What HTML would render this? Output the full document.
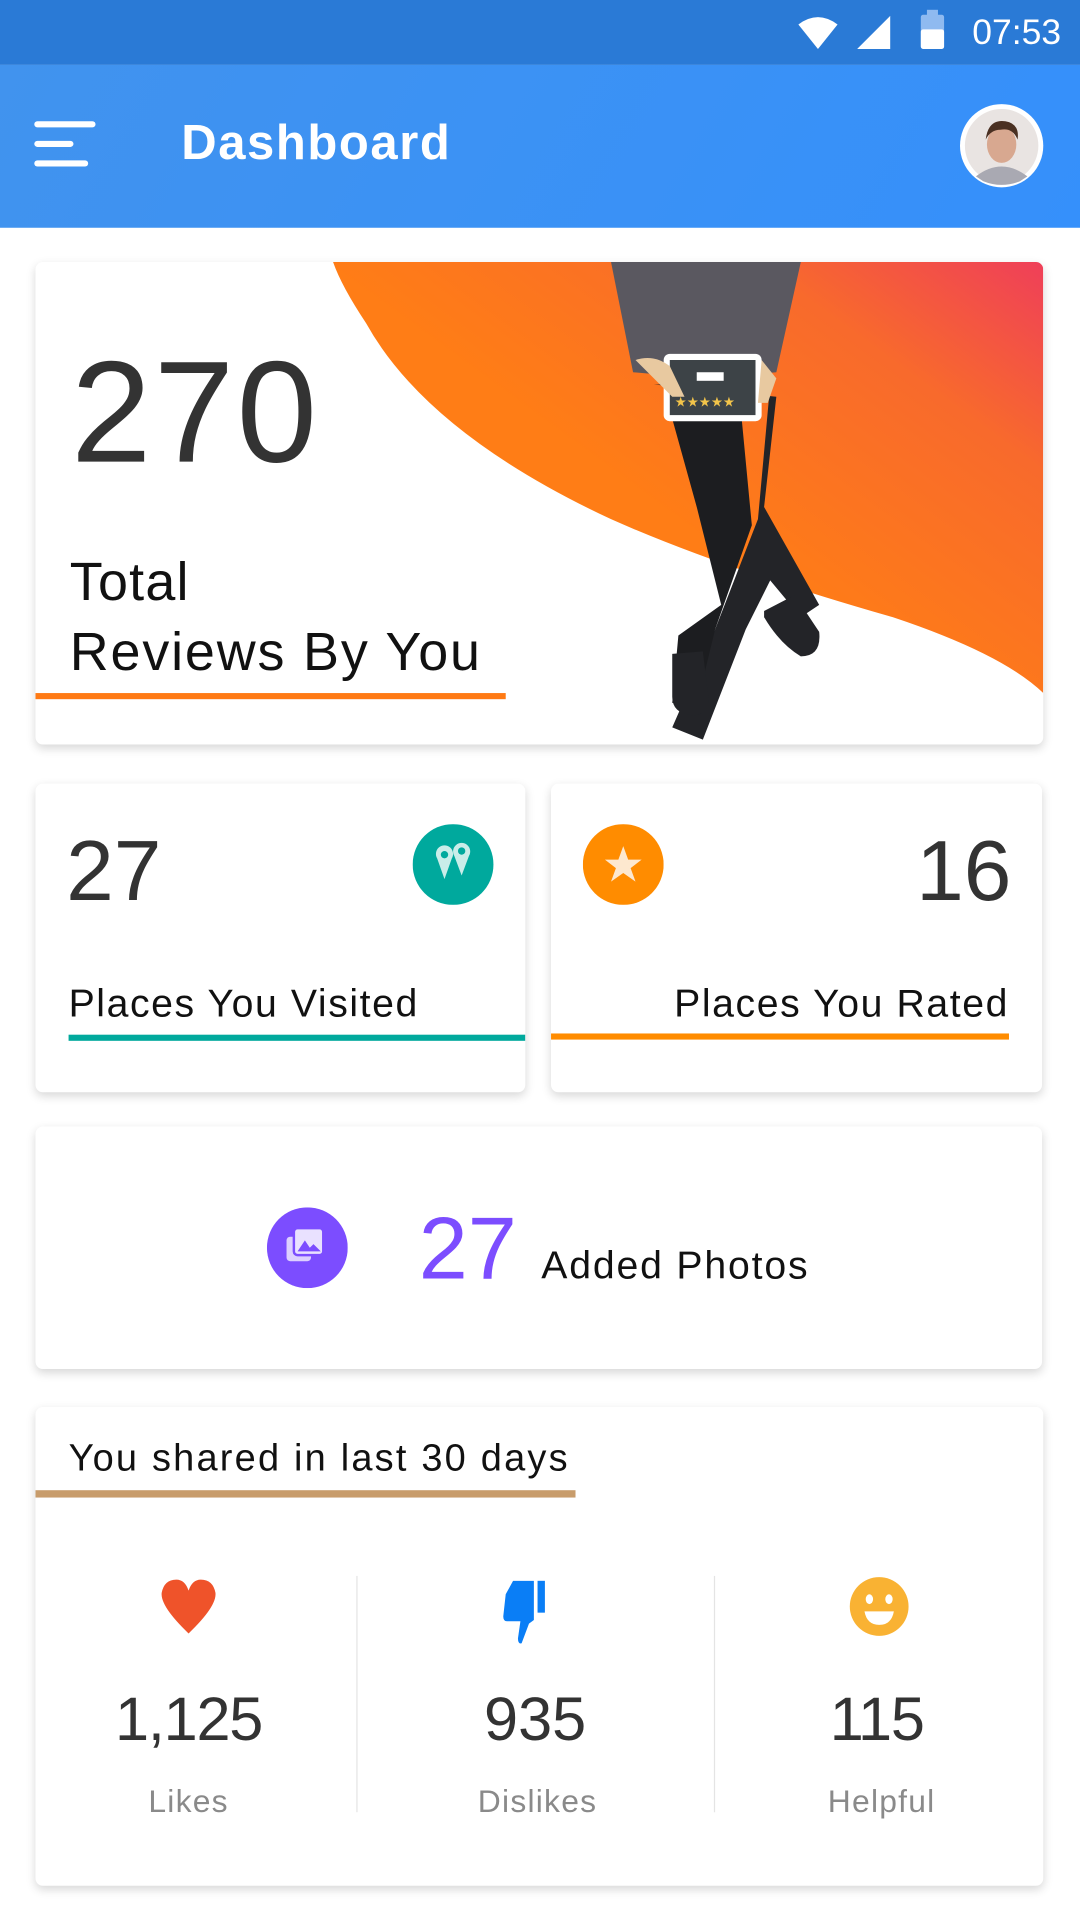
<!DOCTYPE html>
<html><head><meta charset="utf-8"><style>
html,body{margin:0;padding:0;width:1080px;height:1920px;overflow:hidden;background:#fff}
#s{position:absolute;left:0;top:0;width:882px;height:1568px;transform:scale(1.22449);transform-origin:0 0;font-family:"Liberation Sans",sans-serif;background:#fff}
.a{position:absolute}
.card{position:absolute;background:#fff;border-radius:6px;box-shadow:0 3px 8px rgba(0,0,0,.16);overflow:hidden}
.t{position:absolute;white-space:nowrap;line-height:1}
</style></head><body><div id="s">
<div class="a" style="left:0;top:0;width:882px;height:53px;background:#2a7ad6"></div>
<svg class="a" style="left:650;top:0" width="232" height="53" viewBox="650 0 232 53">
<path d="M652 20 Q668 8 684 20 L668 40 Z" fill="#fff"/>
<path d="M700 40 L727 40 L727 13 Z" fill="#fff"/>
<rect x="752" y="12" width="19" height="28" rx="2" fill="#8fbaf0"/><rect x="757" y="8" width="9" height="5" fill="#8fbaf0"/>
<rect x="752" y="24" width="19" height="16" rx="2" fill="#fff"/>
</svg>
<div class="t" style="left:794px;top:13px;font-size:29px;color:#fff">07:53</div>
<div class="a" style="left:0;top:53px;width:882px;height:133px;background:linear-gradient(120deg,#4193ee,#3590fb)"></div>
<div class="a" style="left:28px;top:99px;width:50px;height:5px;border-radius:3px;background:#fff"></div>
<div class="a" style="left:28px;top:115px;width:32px;height:5px;border-radius:3px;background:#fff"></div>
<div class="a" style="left:28px;top:131px;width:44px;height:5px;border-radius:3px;background:#fff"></div>
<div class="t" style="left:148px;top:97px;font-size:40px;color:#fff;font-weight:bold;letter-spacing:1.3px">Dashboard</div>
<svg class="a" style="left:783px;top:84px" width="70" height="70"><circle cx="35" cy="35" r="34" fill="#fff"/><circle cx="35" cy="35" r="30" fill="#e9e4e2"/><path d="M14 60 Q35 44 56 60 L50 64 Q35 70 20 64Z" fill="#a9a9b2"/><ellipse cx="35" cy="34" rx="12" ry="15" fill="#d8a890"/><path d="M22 30 Q24 13 38 15 Q50 17 48 30 Q44 20 34 22 Q26 22 22 30Z" fill="#4a3022"/></svg>

<div class="card" style="left:29px;top:214px;width:823px;height:394px">
<svg class="a" style="left:0;top:0" width="823" height="394">
<defs><linearGradient id="g" x1="0.4" y1="0.5" x2="1" y2="0"><stop offset="0" stop-color="#ff7d16"/><stop offset="0.6" stop-color="#f86a2c"/><stop offset="1" stop-color="#ef3f59"/></linearGradient></defs>
<path d="M243 0 L823 0 L823 352 Q790 320 700 290 Q560 250 470 210 Q320 140 270 50 Q250 20 243 0Z" fill="url(#g)"/>
<path d="M470 0 L625 0 L605 90 L545 95 L488 90Z" fill="#5a5860"/>
<path d="M505 100 L600 100 L590 210 L555 300 L520 380 L545 390 L580 300 L600 260 L625 290 L640 280 L595 200 L605 110Z" fill="#232428"/>
<path d="M515 110 L540 200 L560 280 L525 305 L520 360 L540 362 L555 300 L585 215 L575 110Z" fill="#1c1d20"/>
<rect x="513" y="75" width="80" height="55" rx="5" fill="#fff"/><rect x="518" y="80" width="70" height="45" fill="#3d4347"/>
<rect x="540" y="90" width="22" height="7" fill="#fff"/>
<text x="522" y="118" font-size="11" fill="#f3c44a">★★★★★</text>
<path d="M490 80 Q505 75 518 85 L530 110 L520 110 Z" fill="#e8c9a0"/>
<path d="M593 80 L605 95 L598 115 L590 115Z" fill="#e8c9a0"/>
<path d="M520 320 L545 318 L550 360 Q545 372 535 370 Q520 368 520 355Z" fill="#232428"/>
<path d="M595 285 L620 272 L640 302 Q642 322 625 322 Q608 312 595 290Z" fill="#232428"/>
</svg>
<div class="t" style="left:29px;top:64px;font-size:118px;color:#333;letter-spacing:2px">270</div>
<div class="t" style="left:28px;top:240px;font-size:44px;color:#111;letter-spacing:1px">Total</div>
<div class="t" style="left:28px;top:297px;font-size:44px;color:#111;letter-spacing:1.5px">Reviews By You</div>
<div class="a" style="left:0;top:352px;width:384px;height:5px;background:#ff7a14"></div>
</div>

<div class="card" style="left:29px;top:640px;width:400px;height:252px">
<div class="t" style="left:25px;top:36px;font-size:70px;color:#333">27</div>
<svg class="a" style="left:308px;top:33px" width="66" height="66"><circle cx="33" cy="33" r="33" fill="#00a99d"/><path d="M26 45 L20 28 A7 7 0 1 1 32 28Z" fill="#c9ede9"/><path d="M40 42 L34 26 A7 7 0 1 1 46 26Z" fill="#c9ede9"/><circle cx="26" cy="25" r="3" fill="#00a99d"/><circle cx="40" cy="22" r="3" fill="#00a99d"/></svg>
<div class="t" style="left:27px;top:163px;font-size:32px;color:#111;letter-spacing:1.3px">Places You Visited</div>
<div class="a" style="left:27px;top:205px;width:373px;height:5px;background:#00a99d"></div>
</div>

<div class="card" style="left:450px;top:640px;width:401px;height:252px">
<svg class="a" style="left:26px;top:33px" width="66" height="66"><circle cx="33" cy="33" r="33" fill="#ff8c00"/><path d="M33 18 L37 29 L48 29 L39 36 L43 47 L33 40 L23 47 L27 36 L18 29 L29 29Z" fill="#fde8cf"/></svg>
<div class="t" style="right:25px;top:36px;font-size:70px;color:#333">16</div>
<div class="t" style="right:27px;top:163px;font-size:32px;color:#111;letter-spacing:1.3px">Places You Rated</div>
<div class="a" style="left:0;top:204px;width:374px;height:5px;background:#ff8c00"></div>
</div>

<div class="card" style="left:29px;top:920px;width:822px;height:198px">
<svg class="a" style="left:189px;top:66px" width="66" height="66"><circle cx="33" cy="33" r="33" fill="#7c4dff"/><rect x="16" y="24" width="20" height="20" rx="3" fill="#ddd0ff"/><rect x="22" y="17" width="24" height="22" rx="3" fill="#e9e1ff" stroke="#7c4dff" stroke-width="2"/><path d="M25 36 L31 27 L35 33 L38 30 L44 36Z" fill="#7c4dff"/></svg>
<div class="t" style="left:313px;top:64px;font-size:72px;color:#7c4dff">27</div>
<div class="t" style="left:413px;top:97px;font-size:32px;color:#111;letter-spacing:1.5px">Added Photos</div>
</div>

<div class="card" style="left:29px;top:1149px;width:823px;height:391px">
<div class="t" style="left:27px;top:26px;font-size:31px;color:#111;letter-spacing:1.8px">You shared in last 30 days</div>
<div class="a" style="left:0;top:68px;width:441px;height:6px;background:#c89c6b"></div>
<div class="a" style="left:262px;top:138px;width:1px;height:193px;background:#e4e4e4"></div>
<div class="a" style="left:554px;top:138px;width:1px;height:193px;background:#e4e4e4"></div>
<svg class="a" style="left:100px;top:138px" width="50" height="50"><path d="M25 47 Q2 25 3 14 Q5 3 15 3 Q22 3 25 12 Q28 3 35 3 Q45 3 47 14 Q48 25 25 47Z" fill="#ef532a"/></svg>
<svg class="a" style="left:380px;top:139px" width="56" height="56"><path d="M10 3 L27 3 L27 35 L23 38 L17 54 Q14 55 14 50 L16 36 L5 36 Q2 36 2 32 L4 14Z" fill="#0a7ef6"/><rect x="30" y="3" width="6" height="26" fill="#0a7ef6"/></svg>
<svg class="a" style="left:664px;top:138px" width="50" height="50"><ellipse cx="25" cy="25" rx="24" ry="24" fill="#f9b233"/><ellipse cx="17" cy="19" rx="3" ry="4" fill="#fff"/><ellipse cx="33" cy="19" rx="3" ry="4" fill="#fff"/><path d="M13 29 L37 29 Q35 40 25 40 Q15 40 13 29Z" fill="#fff"/></svg>
<div class="t" style="left:0;width:250px;text-align:center;top:230px;font-size:50px;color:#333;letter-spacing:-1px">1,125</div>
<div class="t" style="left:283px;width:250px;text-align:center;top:230px;font-size:50px;color:#333">935</div>
<div class="t" style="left:562px;width:250px;text-align:center;top:230px;font-size:50px;color:#333;letter-spacing:-1px">115</div>
<div class="t" style="left:0;width:250px;text-align:center;top:309px;font-size:26px;color:#8a8a8a;letter-spacing:1px">Likes</div>
<div class="t" style="left:285px;width:250px;text-align:center;top:309px;font-size:26px;color:#8a8a8a;letter-spacing:1px">Dislikes</div>
<div class="t" style="left:566px;width:250px;text-align:center;top:309px;font-size:26px;color:#8a8a8a;letter-spacing:1px">Helpful</div>
</div>
</div></body></html>
